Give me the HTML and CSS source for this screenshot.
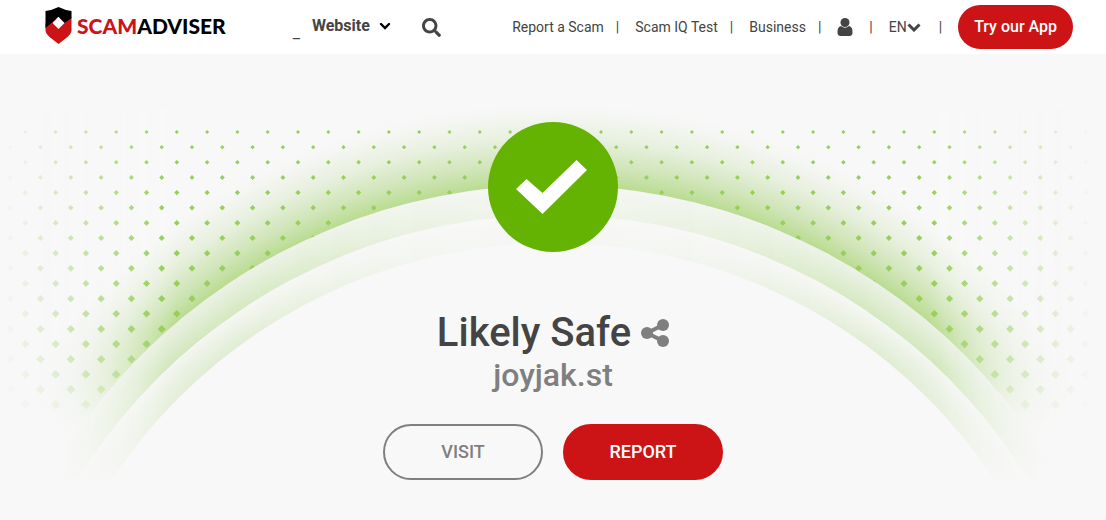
FILE: index.html
```
<!DOCTYPE html>
<html lang="en">
<head>
  <meta charset="UTF-8">
  <meta name="viewport" content="width=device-width, initial-scale=1">
  <title>joyjak.st - Scamadviser</title>
  <link rel="stylesheet" href="styles.css">
</head>
<body>
  <header class="header">
    <a href="#" class="logo">
      <svg class="logo-shield" viewBox="0 0 26 38" aria-hidden="true">
        <path fill="#cc1417" d="M0 16 L13 11 L26 10 V24 Q25.500 27 22 30 L13 37 L4 30 Q.5 27 0 24 Z"/>
        <path fill="#000" d="M0 4 Q7 3 13 0 Q19 3 26 4 V11 L19 16 L13 10 L7 15 L0 21 Z"/>
        <path fill="#fff" d="M13 10 L19 16 L13 22 L7 16 Z"/>
      </svg>
      <span class="logo-text"><span class="logo-red">SCAM</span>ADVISER</span>
    </a>

    <div class="search">
      <span class="search-mark">_</span>
      <label class="search-type">
        <select class="search-select" aria-label="Search type">
          <option>Website</option>
        </select>
        <svg class="search-arrow" viewBox="0 0 12 8" aria-hidden="true"><path d="M2 2 L6 6 L10 2" fill="none" stroke="#000" stroke-width="2.4" stroke-linecap="round"/></svg>
      </label>
      <button type="button" class="search-btn" aria-label="Search">
        <svg viewBox="0 0 512 512"><path fill="#444" d="M505 442.700L405.300 343c-4.500-4.500-10.600-7-17-7H372c27.600-35.300 44-79.700 44-128C416 93.100 322.900 0 208 0S0 93.100 0 208s93.100 208 208 208c48.300 0 92.700-16.400 128-44v16.300c0 6.400 2.500 12.500 7 17l99.700 99.700c9.400 9.400 24.600 9.400 33.900 0l28.300-28.300c9.400-9.400 9.400-24.600.1-34zM208 336c-70.700 0-128-57.200-128-128 0-70.700 57.200-128 128-128 70.700 0 128 57.200 128 128 0 70.700-57.200 128-128 128z"/></svg>
      </button>
    </div>

    <nav class="nav">
      <a href="#">Report a Scam</a><span class="sep">|</span>
      <a href="#">Scam IQ Test</a><span class="sep">|</span>
      <a href="#">Business</a><span class="sep">|</span>
      <a href="#" class="nav-user" aria-label="Account">
        <svg viewBox="0 0 16 18"><circle cx="8" cy="4.500" r="4.500" fill="#444"/><path fill="#444" d="M4 8 Q8 11.500 12 8 Q16 9 15.500 15 Q15.200 18 12.500 18 H3.500 Q.8 18 .5 15 Q0 9 4 8 Z"/></svg>
      </a><span class="sep">|</span>
      <button type="button" class="nav-lang">EN<svg viewBox="0 0 14 9" aria-hidden="true"><path d="M1.500 1.500 L7 7 L12.500 1.500" fill="none" stroke="#444" stroke-width="3"/></svg></button><span class="sep">|</span>
      <a href="#" class="app-btn">Try our App</a>
    </nav>
  </header>

  <main class="hero">
    <svg class="hero-bg" viewBox="0 109 1106 371" preserveAspectRatio="xMidYMin slice" aria-hidden="true">
      <defs>
        <linearGradient id="sides">
          <stop offset="0" stop-color="#000"/>
          <stop offset=".15" stop-color="#fff"/>
          <stop offset=".84" stop-color="#fff"/>
          <stop offset=".99" stop-color="#000"/>
        </linearGradient>
        <linearGradient id="glowSides">
          <stop offset=".03" stop-color="#000"/>
          <stop offset=".16" stop-color="#fff"/>
          <stop offset=".84" stop-color="#fff"/>
          <stop offset=".97" stop-color="#000"/>
        </linearGradient>
        <linearGradient id="ringSides">
          <stop offset=".04" stop-color="#000"/>
          <stop offset=".15" stop-color="#fff"/>
          <stop offset=".22" stop-color="#eee"/>
          <stop offset=".36" stop-color="#666"/>
          <stop offset=".5" stop-color="#222"/>
          <stop offset=".64" stop-color="#666"/>
          <stop offset=".78" stop-color="#eee"/>
          <stop offset=".85" stop-color="#fff"/>
          <stop offset=".96" stop-color="#000"/>
        </linearGradient>
        <linearGradient id="fadeDown" gradientUnits="userSpaceOnUse" x1="0" y1="109" x2="0" y2="480">
          <stop offset=".6" stop-color="#f8f8f8" stop-opacity="0"/>
          <stop offset=".72" stop-color="#f8f8f8" stop-opacity=".3"/>
          <stop offset=".86" stop-color="#f8f8f8" stop-opacity=".95"/>
          <stop offset="1" stop-color="#f8f8f8"/>
        </linearGradient>
        <linearGradient id="fadeRing" gradientUnits="userSpaceOnUse" x1="0" y1="109" x2="0" y2="480">
          <stop offset=".7" stop-color="#f8f8f8" stop-opacity="0"/>
          <stop offset="1" stop-color="#f8f8f8" stop-opacity=".85"/>
        </linearGradient>
        <radialGradient id="glow" gradientUnits="userSpaceOnUse" cx="553" cy="768" r="670">
          <stop offset=".87" stop-color="#badc91"/>
          <stop offset=".9" stop-color="#d0e5b8"/>
          <stop offset=".94" stop-color="#e8f0df"/>
          <stop offset=".98" stop-color="#f6f7f5"/>
          <stop offset="1" stop-color="#f8f8f8"/>
        </radialGradient>
        <radialGradient id="ring1" gradientUnits="userSpaceOnUse" cx="553" cy="768" r="583">
          <stop offset=".92" stop-color="#c4e1a3"/>
          <stop offset="1" stop-color="#eaf1e4"/>
        </radialGradient>
        <radialGradient id="ring2" gradientUnits="userSpaceOnUse" cx="553" cy="775" r="560">
          <stop offset=".93" stop-color="#d6e8c3"/>
          <stop offset="1" stop-color="#f4f6f2"/>
        </radialGradient>
        <linearGradient id="ring2Top" gradientUnits="userSpaceOnUse" x1="0" y1="215" x2="0" y2="340">
          <stop offset="0" stop-color="#f8f8f8" stop-opacity=".6"/>
          <stop offset="1" stop-color="#f8f8f8" stop-opacity="0"/>
        </linearGradient>
        <mask id="sidesMask" maskUnits="userSpaceOnUse" x="0" y="109" width="1106" height="371"><rect y="109" width="1106" height="371" fill="url(#sides)"/></mask>
        <mask id="glowMask" maskUnits="userSpaceOnUse" x="0" y="109" width="1106" height="371"><rect y="109" width="1106" height="371" fill="url(#glowSides)"/></mask>
        <mask id="ringMask" maskUnits="userSpaceOnUse" x="0" y="109" width="1106" height="371"><rect y="109" width="1106" height="371" fill="url(#ringSides)"/></mask>
      </defs>
      <rect y="109" width="1106" height="371" fill="url(#glow)" mask="url(#glowMask)"/>
      <g id="dots" fill="#98ce5a" mask="url(#sidesMask)"></g>
      <rect y="109" width="1106" height="371" fill="url(#fadeDown)"/>
      <circle cx="553" cy="768" r="583" fill="#f8f8f8"/>
      <circle cx="553" cy="768" r="583" fill="url(#ring1)" mask="url(#ringMask)"/>
      <circle cx="553" cy="775" r="560" fill="#f8f8f8"/>
      <circle cx="553" cy="775" r="560" fill="url(#ring2)" mask="url(#ringMask)"/>
      <circle cx="553" cy="775" r="560" fill="url(#ring2Top)"/>
      <circle cx="553" cy="768" r="583" fill="url(#fadeRing)"/>
      <circle cx="553" cy="773" r="530" fill="#f8f8f8"/>
    </svg>

    <svg class="hero-check" viewBox="0 0 130 130" role="img" aria-label="Safe">
      <circle cx="65" cy="65" r="65" fill="#64b201"/>
      <path fill="#fff" d="M28 67 L38.500 57 L54.500 71 L88.500 38 L99 48 L54.500 92 Z"/>
    </svg>

    <div class="title-row">
      <h1>Likely Safe</h1>
      <button type="button" class="share-btn" aria-label="Share">
        <svg viewBox="0 0 28 28"><path d="M22 6 L6 14 L22 22" fill="none" stroke="#7f7f7f" stroke-width="4"/><circle cx="22" cy="6" r="6" fill="#7f7f7f"/><circle cx="6" cy="14" r="6" fill="#7f7f7f"/><circle cx="22" cy="22" r="6" fill="#7f7f7f"/></svg>
      </button>
    </div>
    <h2>joyjak.st</h2>
    <div class="actions">
      <a href="#" class="btn btn-visit">VISIT</a>
      <a href="#" class="btn btn-report">REPORT</a>
    </div>
  </main>

  <script>
    // diamonds get bigger row by row, odd rows are shifted by half a step
    const dots = document.getElementById('dots');
    const step = 30.3;
    let d = '';
    for (let row = 0; row < 19; row++) {
      const y = 132 + row * step / 2;
      const r = 2 + row * 0.15;
      const start = row % 2 ? 10.2 : 25.3;
      for (let x = start; x < 1106; x += step) {
        d += `M${x - r} ${y}l${r} ${-r}l${r} ${r}l${-r} ${r}z`;
      }
    }
    const path = document.createElementNS('http://www.w3.org/2000/svg', 'path');
    path.setAttribute('d', d);
    dots.appendChild(path);
  </script>
</body>
</html>
```
FILE: styles.css
```
* {
  box-sizing: border-box;
}
body {
  margin: 0;
  font-family: Roboto, Arial, sans-serif;
  font-size: 14px;
  color: #444;
  background-color: #f8f8f8;
}
a {
  color: inherit;
  text-decoration: none;
}
button {
  padding: 0;
  border: 0;
  background: none;
  font: inherit;
  color: inherit;
  cursor: pointer;
}
svg {
  display: block;
}
.header {
  display: flex;
  align-items: center;
  height: 54px;
  padding: 0 33px 0 45px;
  background-color: white;
}
.logo {
  display: flex;
  align-items: center;
  gap: 5px;
  padding-bottom: 3px;
}
.logo-shield {
  width: 27px;
  height: 38px;
}
.logo-text {
  font-family: Lato, sans-serif;
  font-size: 21px;
  font-weight: 900;
  line-height: 24px;
  color: #000;
}
.logo-red {
  color: #cc1417;
}
.search {
  display: flex;
  align-items: center;
  margin-left: 67px;
}
.search-mark {
  padding-top: 10px;
  font-size: 16px;
}
.search-type {
  display: flex;
  align-items: center;
  gap: 9px;
  margin-left: 12px;
  padding-bottom: 3px;
}
.search-select {
  appearance: none;
  padding: 0;
  border: 0;
  background: none;
  font: bold 16px Roboto, Arial, sans-serif;
  color: #444;
}
.search-arrow {
  width: 12px;
  height: 8px;
}
.search-btn {
  margin-left: 31px;
}
.search-btn svg {
  width: 19px;
  height: 19px;
}
.nav {
  display: flex;
  align-items: center;
  margin-left: auto;
}
.sep {
  margin: 0 16px 0 12px;
}
.nav-user {
  margin-right: 4px;
}
.nav-user svg {
  width: 16px;
  height: 18px;
}
.nav-lang {
  display: flex;
  align-items: center;
  margin-right: 6px;
}
.nav-lang svg {
  width: 14px;
  height: 9px;
}
.app-btn {
  padding: 0 16px;
  border-radius: 22px;
  background-color: #cc1417;
  color: white;
  font-size: 16px;
  font-weight: 500;
  line-height: 44px;
}
.hero {
  position: relative;
  display: flex;
  flex-direction: column;
  align-items: center;
  padding: 68px 20px 40px;
}
/* halftone and arcs behind the result */
.hero-bg {
  position: absolute;
  top: 55px;
  left: 0;
  z-index: -1;
  width: 100%;
  height: 371px;
}
.hero-check {
  width: 130px;
  height: 130px;
}
.title-row {
  display: flex;
  align-items: center;
  gap: 10px;
  margin-top: 58px;
}
h1 {
  margin: 0;
  font-size: 40px;
  font-weight: 500;
  line-height: 46px;
}
.share-btn svg {
  width: 28px;
  height: 28px;
}
h2 {
  margin: 0;
  font-size: 32px;
  font-weight: 500;
  line-height: 38px;
  color: #7f7f7f;
}
.actions {
  display: flex;
  gap: 20px;
  margin-top: 30px;
}
.btn {
  width: 160px;
  border: 2px solid #7f7f7f;
  border-radius: 28px;
  font-size: 18px;
  font-weight: 500;
  line-height: 52px;
  text-align: center;
}
.btn-visit {
  color: #7f7f7f;
}
.btn-report {
  border-color: #cc1417;
  background-color: #cc1417;
  color: white;
}
```
